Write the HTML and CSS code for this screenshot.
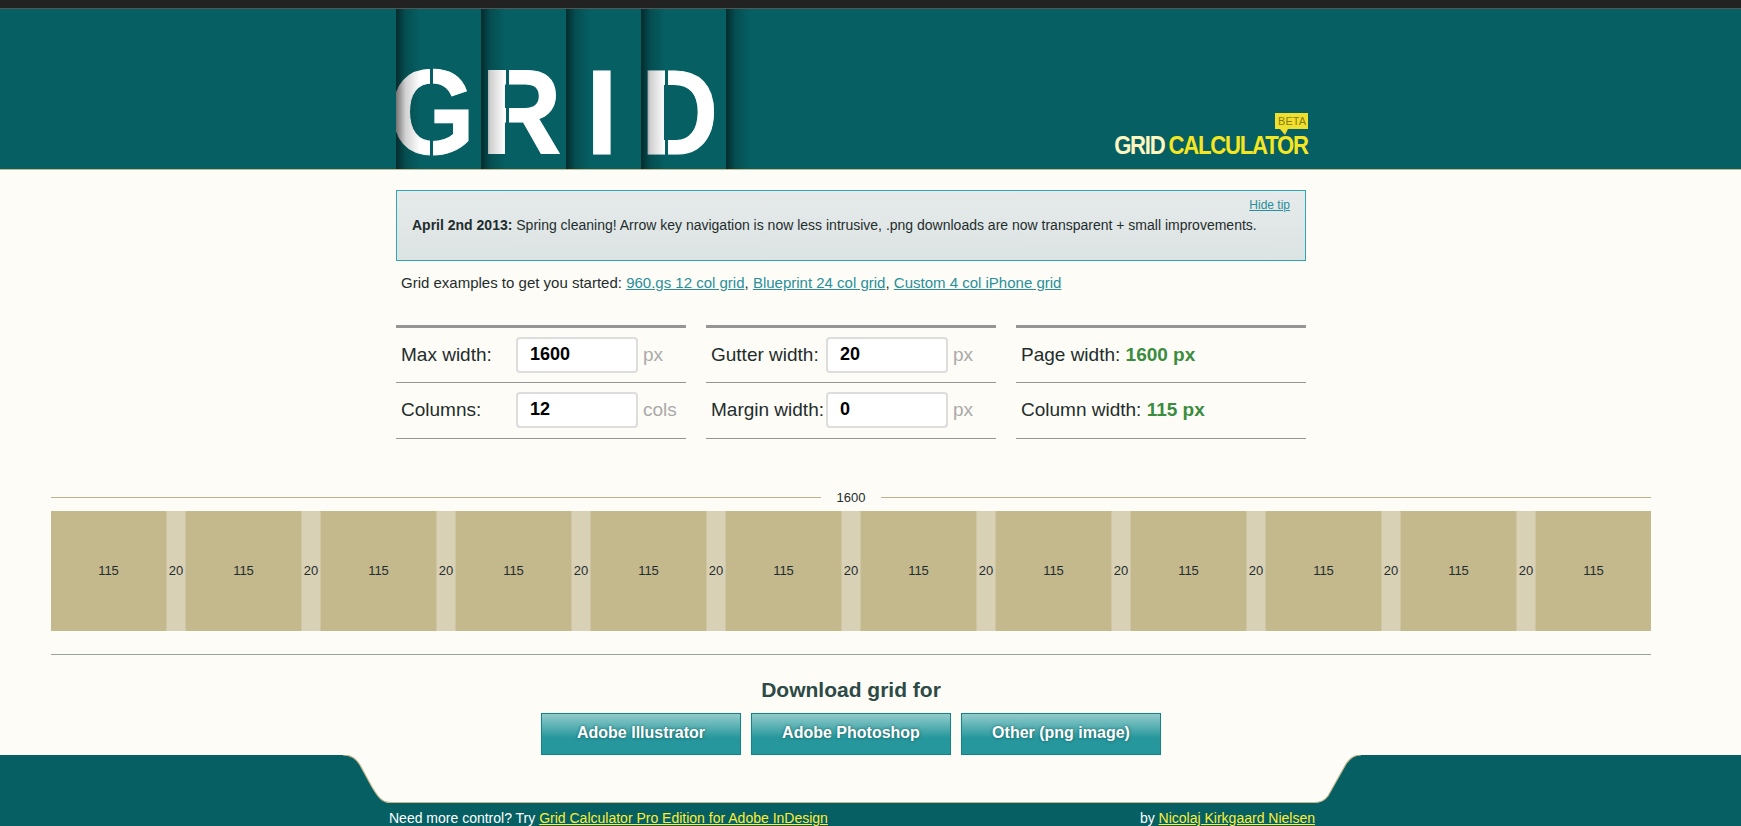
FILE: index.html
```html
<!DOCTYPE html>
<html lang="en">
<head>
    <meta charset="UTF-8">
    <meta name="viewport" content="width=device-width, initial-scale=1.0">
    <title>Grid Calculator</title>
    <link rel="stylesheet" href="styles.css">
</head>
<body>
    <div class="topbar"></div>

    <div class="page">
        <header class="header">
            <div class="wrap header-inner">
                <div class="logo">
                    <div class="panel panel-g"><span class="letter letter-g">G</span><i class="cut cut-g"></i></div>
                    <div class="panel panel-r"><span class="letter letter-r">R</span><i class="cut cut-r"></i></div>
                    <div class="panel panel-i"><span class="letter letter-i">I</span></div>
                    <div class="panel panel-d"><span class="letter letter-d">D</span><i class="cut cut-d"></i></div>
                    <div class="panel panel-end"></div>
                </div>
                <div class="brand">
                    <span class="beta">BETA</span>
                    <div class="brand-name"><span class="brand-grid">GRID</span> CALCULATOR</div>
                </div>
            </div>
        </header>

        <div class="wrap">
            <div class="tip">
                <a class="hide-tip" href="#">Hide tip</a>
                <p><strong>April 2nd 2013:</strong> Spring cleaning! Arrow key navigation is now less intrusive, .png downloads are now transparent + small improvements.</p>
            </div>

            <p class="examples">Grid examples to get you started: <a href="#">960.gs 12 col grid</a>, <a href="#">Blueprint 24 col grid</a>, <a href="#">Custom 4 col iPhone grid</a></p>

            <div class="form">
                <div class="form-col">
                    <div class="row">
                        <label class="row-label">Max width:</label>
                        <input class="field" type="text" value="1600">
                        <span class="unit">px</span>
                    </div>
                    <div class="row">
                        <label class="row-label">Columns:</label>
                        <input class="field" type="text" value="12">
                        <span class="unit">cols</span>
                    </div>
                </div>
                <div class="form-col">
                    <div class="row">
                        <label class="row-label">Gutter width:</label>
                        <input class="field" type="text" value="20">
                        <span class="unit">px</span>
                    </div>
                    <div class="row">
                        <label class="row-label">Margin width:</label>
                        <input class="field" type="text" value="0">
                        <span class="unit">px</span>
                    </div>
                </div>
                <div class="form-col">
                    <div class="row">Page width:&nbsp;<b class="result">1600 px</b></div>
                    <div class="row">Column width:&nbsp;<b class="result">115 px</b></div>
                </div>
            </div>
        </div>

        <div class="preview">
            <div class="measure"><span>1600</span></div>
            <div class="blocks">
                <div class="col">115</div><div class="gutter">20</div>
                <div class="col">115</div><div class="gutter">20</div>
                <div class="col">115</div><div class="gutter">20</div>
                <div class="col">115</div><div class="gutter">20</div>
                <div class="col">115</div><div class="gutter">20</div>
                <div class="col">115</div><div class="gutter">20</div>
                <div class="col">115</div><div class="gutter">20</div>
                <div class="col">115</div><div class="gutter">20</div>
                <div class="col">115</div><div class="gutter">20</div>
                <div class="col">115</div><div class="gutter">20</div>
                <div class="col">115</div><div class="gutter">20</div>
                <div class="col">115</div>
            </div>
        </div>

        <div class="download">
            <h2>Download grid for</h2>
            <div class="buttons">
                <a class="button" href="#">Adobe Illustrator</a>
                <a class="button" href="#">Adobe Photoshop</a>
                <a class="button" href="#">Other (png image)</a>
            </div>
        </div>
    </div>

    <footer class="footer">
        <svg class="footer-shape" width="1741" height="71" viewBox="0 0 1741 71">
            <path fill="#065f63" d="M0 71V0H343C352 0 356 4 360 10L372 32C378 42 382 47.5 390 47.5H1315C1322 47.5 1325 45 1328 41L1346 9C1350 3 1354 0 1361 0H1741V71Z"/>
            <path fill="none" stroke="#c4b88d" stroke-width="1.2" d="M343 0C352 0 356 4 360 10L372 32C378 42 382 47.5 390 47.5H1315C1322 47.5 1325 45 1328 41L1346 9C1350 3 1354 0 1361 0"/>
        </svg>
        <div class="footer-text">
            <span>Need more control? Try <a href="#">Grid Calculator Pro Edition for Adobe InDesign</a></span>
            <span>by <a href="#">Nicolaj Kirkgaard Nielsen</a></span>
        </div>
    </footer>
</body>
</html>
```

FILE: styles.css
```css
body {
    margin: 0;
    background-color: #fdfcf6;
    color: #1f2d2d;
    font-family: "Liberation Sans", Arial, sans-serif;
    font-size: 14px;
}

a {
    color: #2a8f9b;
}

.topbar {
    height: 9px;
    background-color: #222;
    box-shadow: inset 0 -1px 0 #555;
}

/* the page was laid out 1702 wide, not the whole window */
.page {
    width: 1702px;
}

.wrap {
    width: 910px;
    margin: 0 auto;
}

.header {
    width: 1741px;
    height: 160px;
    background-color: #065f63;
    border-bottom: 1px solid #c4b88d;
}

.header-inner {
    display: flex;
    justify-content: space-between;
    margin-left: 396px;
}

/* big logo */
.logo {
    display: flex;
    height: 160px;
}

.panel {
    position: relative;
    width: 85px;
    color: #fff;
}

.panel::after {
    content: "";
    position: absolute;
    top: 0;
    bottom: 0;
    left: 0;
    width: 24px;
    background: linear-gradient(to right, rgba(0, 0, 0, 0.55), rgba(0, 0, 0, 0.18) 40%, rgba(0, 0, 0, 0));
}

/* covers the left of the G, the panel edge slices it flat */
.panel-g::before {
    content: "";
    position: absolute;
    top: 0;
    bottom: 0;
    left: -10px;
    z-index: 1;
    width: 10px;
    background-color: #065f63;
}

.panel-i {
    width: 75px;
}

.panel-end {
    width: 26px;
}

.letter {
    position: absolute;
    top: 43px;
    font-weight: bold;
    font-size: 120px;
    line-height: 120px;
    -webkit-text-stroke: 1px #fff;
    transform-origin: left center;
}

.letter-g {
    left: -7px;
    transform: scaleX(0.92);
}

.letter-r {
    left: 0;
    transform: scaleX(0.93);
}

.letter-i {
    left: 20px;
    transform: scaleX(0.95);
}

.letter-d {
    left: 0;
    transform: scaleX(0.89);
}

.cut {
    position: absolute;
    top: 50px;
    width: 3px;
    height: 110px;
    background-color: #065f63;
}

.cut-g {
    left: 34px;
}

.cut-r {
    left: 25px;
}

.cut-d {
    left: 24px;
}

/* small logo on the right */
.brand {
    position: relative;
    align-self: flex-end;
    margin-right: -2px;
    margin-bottom: 11px;
}

.brand-name {
    color: #f5e621;
    font-weight: bold;
    font-size: 25px;
    line-height: 25px;
    letter-spacing: -1.4px;
    word-spacing: -1px;
    white-space: nowrap;
    transform: scaleX(0.885);
    transform-origin: right center;
}

.brand-grid {
    color: #fdf7c0;
}

.beta {
    position: absolute;
    top: -20px;
    right: 0;
    padding: 0 2px 0 3px;
    height: 16px;
    background-color: #efe02f;
    color: #8a7d10;
    font-size: 11px;
    line-height: 17px;
}

.beta::after {
    content: "";
    position: absolute;
    left: 5px;
    top: 16px;
    border-top: 6px solid #efe02f;
    border-left: 5px solid transparent;
    border-right: 3px solid transparent;
}

/* tip */
.tip {
    position: relative;
    box-sizing: border-box;
    height: 71px;
    margin-top: 20px;
    padding: 26px 15px 0;
    border: 1px solid #2fa5ad;
    background: linear-gradient(#e6eaea, #dce3e3);
}

.tip p {
    margin: 0;
    line-height: 17px;
}

.hide-tip {
    position: absolute;
    top: 7px;
    right: 15px;
    font-size: 12px;
}

.examples {
    margin: 12px 0 0;
    padding-left: 5px;
    font-size: 15px;
    line-height: 20px;
}

/* form */
.form {
    display: flex;
    gap: 20px;
    margin-top: 32px;
}

.form-col {
    width: 290px;
    border-top: 3px solid #959595;
}

.row {
    box-sizing: border-box;
    display: flex;
    align-items: center;
    height: 55px;
    padding-left: 5px;
    border-bottom: 1px solid #959595;
    font-size: 19px;
}

.row + .row {
    height: 56px;
    padding-bottom: 1px;
}

.row-label {
    width: 115px;
    white-space: nowrap;
}

.field {
    box-sizing: border-box;
    width: 122px;
    height: 36px;
    padding: 0 0 2px 12px;
    border: 2px solid #ddd;
    border-radius: 4px;
    background-color: #fff;
    color: #000;
    font-family: "Liberation Sans", Arial, sans-serif;
    font-weight: bold;
    font-size: 18px;
}

.unit {
    margin-left: 5px;
    color: #aaa;
}

.result {
    color: #3a8c3f;
}

/* grid preview */
.preview {
    width: 1600px;
    margin: 50px auto 0;
}

.measure {
    display: flex;
    align-items: center;
    height: 16px;
    font-size: 13px;
}

.measure::before,
.measure::after {
    content: "";
    flex: 1;
    height: 1px;
    background-color: #bcb18c;
}

.measure span {
    padding: 0 16px;
}

.blocks {
    display: flex;
    margin-top: 6px;
    padding-bottom: 23px;
    border-bottom: 1px solid #9aa09a;
    font-size: 13px;
}

.col,
.gutter {
    box-sizing: border-box;
    display: flex;
    align-items: center;
    justify-content: center;
    height: 120px;
    padding-bottom: 2px;
}

.col {
    width: 115px;
    background-color: #c4b88d;
}

.gutter {
    width: 20px;
    background-color: #d9d1b5;
    border-left: 1px solid #d0c6a3;
    border-right: 1px solid #d0c6a3;
}

/* download */
.download {
    text-align: center;
}

.download h2 {
    margin: 23px 0 0;
    color: #2d4a46;
    font-size: 21px;
    line-height: 23px;
}

.buttons {
    display: flex;
    justify-content: center;
    gap: 10px;
    margin-top: 12px;
}

.button {
    box-sizing: border-box;
    width: 200px;
    height: 42px;
    border: 1px solid #0f8489;
    background: linear-gradient(#92cccc, #26979c 60%);
    color: #fff;
    font-weight: bold;
    font-size: 16px;
    line-height: 38px;
    text-decoration: none;
    text-shadow: 0 0 3px rgba(0, 60, 60, 0.7);
}

/* footer */
.footer {
    position: relative;
    height: 71px;
    overflow: hidden;
}

.footer-shape {
    position: absolute;
    top: 0;
    left: 0;
}

.footer-text {
    position: relative;
    display: flex;
    justify-content: space-between;
    width: 926px;
    margin-left: 389px;
    padding-top: 55px;
    color: #fff;
    line-height: 16px;
}

.footer-text a {
    color: #ffee33;
}
```
